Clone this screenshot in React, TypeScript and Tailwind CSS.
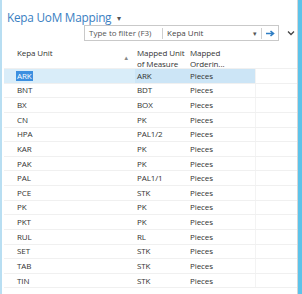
import React from "react";

const rows: [string, string][] = [
  ["ARK", "ARK"],
  ["BNT", "BDT"],
  ["BX", "BOX"],
  ["CN", "PK"],
  ["HPA", "PAL1/2"],
  ["KAR", "PK"],
  ["PAK", "PK"],
  ["PAL", "PAL1/1"],
  ["PCE", "STK"],
  ["PK", "PK"],
  ["PKT", "PK"],
  ["RUL", "RL"],
  ["SET", "STK"],
  ["TAB", "STK"],
  ["TIN", "STK"],
];

export default function App() {
  return (
    <div
      className="w-[302px] h-[294px] bg-white flex overflow-hidden text-[#333]"
      style={{ fontFamily: '"Open Sans", "Noto Sans", sans-serif' }}
    >
      <div className="w-[2px] bg-[#b8def2]" />
      <div className="flex-1 flex flex-col">
        <div className="h-[10px]" />
        <div className="flex items-center h-[15px] pl-[5px]">
          <span className="text-[11.8px] leading-none text-[#3a80c2] tracking-[-0.25px]">Kepa UoM Mapping</span>
          <span className="ml-[6px] text-[8px] text-[#555] leading-none mt-[1px]">▾</span>
        </div>
        <div className="flex items-center h-[16px]">
          <div className="ml-[82px] w-[195px] h-[16px] border border-[#c9c9c9] flex items-center text-[8px] leading-none whitespace-nowrap">
            <span className="pl-[4px] w-[77px] text-[#555]">Type to filter (F3)</span>
            <div className="w-px h-[11px] bg-[#cfcfcf]" />
            <span className="pl-[4px] flex-1 text-[#444]">Kepa Unit</span>
            <span className="text-[7px] text-[#555] mr-[4px]">▾</span>
            <div className="w-px h-[11px] bg-[#cfcfcf]" />
            <div className="w-[16px] flex items-center justify-center">
              <svg width="9" height="7" viewBox="0 0 9 7">
                <path d="M0 3.5H7M4.5 1L7.5 3.5L4.5 6" stroke="#2f7ec4" strokeWidth="1.6" fill="none" />
              </svg>
            </div>
          </div>
          <div className="ml-[8px]">
            <svg width="8" height="6" viewBox="0 0 8 6">
              <path d="M1 1.5L4 4.5L7 1.5" stroke="#444" strokeWidth="1.3" fill="none" />
            </svg>
          </div>
        </div>
        <div className="flex h-[28px] pt-[6px] text-[8px] leading-[11px] border-b border-[#f0f0f0] ml-[2px] whitespace-nowrap tracking-[-0.1px]">
          <div className="w-[131px] pl-[13px] flex justify-between pr-[6px]">
            <span>Kepa Unit</span>
            <span className="text-[6px] text-[#888] mt-[6px]">▲</span>
          </div>
          <div className="w-[53px] pl-[2px]">
            Mapped Unit<br />of Measure
          </div>
          <div className="w-[67px] pl-[2px]">
            Mapped<br />Orderin...
          </div>
        </div>
        <div className="flex flex-col ml-[2px] whitespace-nowrap tracking-[-0.1px]">
          {rows.map(([a, b], i) => {
            const sel = i === 0;
            return (
              <div
                key={a}
                className="flex h-[14.64px] items-center text-[8px] leading-none border-b border-[#f0f0f0]"
              >
                <div className={`w-[131px] pl-[13px] h-full flex items-center ${sel ? "bg-[#d9edf9]" : ""}`}>
                  {sel ? (
                    <span className="bg-[#3c8fe0] text-white px-[1px] -ml-[1px] leading-[10px]">{a}</span>
                  ) : (
                    a
                  )}
                </div>
                <div className={`w-[53px] pl-[2px] h-full flex items-center ${sel ? "bg-[#cce5f6]" : ""}`}>{b}</div>
                <div className={`w-[67px] pl-[2px] h-full flex items-center ${sel ? "bg-[#cce5f6]" : ""}`}>Pieces</div>
                <div className="flex-1 h-full border-l border-[#f3f3f3]" />
              </div>
            );
          })}
        </div>
      </div>
      <div className="w-px bg-[#d6d6d6]" />
      <div className="w-[4px] bg-[#5cc3ea]" />
    </div>
  );
}
